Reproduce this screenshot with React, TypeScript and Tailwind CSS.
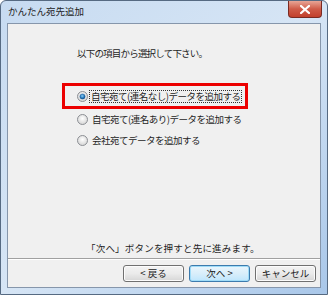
import React from 'react';

const Radio: React.FC<{ checked?: boolean }> = ({ checked }) => (
  <svg width="11" height="11" viewBox="0 0 11 11" className="shrink-0">
    <defs>
      <radialGradient id={checked ? 'rOn' : 'rOff'} cx="50%" cy="40%" r="60%">
        <stop offset="0%" stopColor="#ffffff" />
        <stop offset="100%" stopColor="#d4d4d4" />
      </radialGradient>
      <radialGradient id="dot" cx="45%" cy="40%" r="60%">
        <stop offset="0%" stopColor="#8fd0f5" />
        <stop offset="60%" stopColor="#2c7fc2" />
        <stop offset="100%" stopColor="#0e4f8c" />
      </radialGradient>
    </defs>
    <circle cx="5.5" cy="5.5" r="5" fill={`url(#${checked ? 'rOn' : 'rOff'})`} stroke="#8c8f94" strokeWidth="1" />
    {checked && <circle cx="5.5" cy="5.5" r="2.6" fill="url(#dot)" stroke="#1b5a94" strokeWidth="0.5" />}
  </svg>
);

const Btn: React.FC<{ label: string; primary?: boolean }> = ({ label, primary }) => (
  <div
    className={
      'w-[61px] h-[17px] rounded-[3px] border flex items-center justify-center text-[9.5px] leading-none text-[#1a1a1a] ' +
      (primary
        ? 'border-[#3d7bad] bg-gradient-to-b from-[#eaf6fd] via-[#d9eefa] to-[#bee6fd] shadow-[inset_0_0_0_1px_#9fdcf8]'
        : 'border-[#707070] bg-gradient-to-b from-[#f3f3f3] via-[#ebebeb] to-[#d6d6d6] shadow-[inset_0_0_0_1px_#fcfcfc]')
    }
  >
    {label}
  </div>
);

export default function App() {
  return (
    <div
      className="w-[328px] h-[295px] flex flex-col rounded-t-[6px] border border-[#566a82] bg-gradient-to-br from-[#c7dbf1] via-[#d6e5f5] to-[#a9c7e9] text-[#1e1e1e]"
      style={{ fontFamily: '"Noto Sans CJK JP", "Noto Sans", sans-serif' }}
    >
      {/* title bar */}
      <div className="h-[21px] flex items-start justify-between">
        <div className="pl-[7px] pt-[4px] text-[9.5px] leading-[12px] text-[#222]">かんたん宛先追加</div>
        <div className="mr-[5px] w-[34px] h-[17px] rounded-b-[4px] border border-t-0 border-[#7a2a22] bg-gradient-to-b from-[#e7a596] via-[#cf5b48] to-[#c2402c] flex items-center justify-center">
          <svg width="10" height="9" viewBox="0 0 10 9">
            <path d="M1 1 L9 8 M9 1 L1 8" stroke="#ffffff" strokeWidth="2.2" strokeLinecap="square" />
          </svg>
        </div>
      </div>

      {/* client area */}
      <div className="flex-1 mt-[1px] mx-[6px] mb-[6px] border border-[#8696ab] bg-[#f0f0f0] flex flex-col">
        <div className="pl-[69px] pt-[23px] text-[9.5px] leading-[12px] tracking-[-0.8px] whitespace-nowrap">以下の項目から選択して下さい。</div>

        <div className="mt-[24px] ml-[54px] w-[186px] h-[26px] border-[3px] border-[#ec0000] flex items-center pl-[12px] gap-[1px]">
          <Radio checked />
          <span className="text-[9.5px] leading-[11px] tracking-[-0.5px] whitespace-nowrap border border-dotted border-[#333] px-[1px]">
            自宅宛て(連名なし)データを追加する
          </span>
        </div>

        <div className="flex flex-col gap-[10px] pl-[69px] mt-[5px]">
          <div className="flex items-center gap-[3px]">
            <Radio />
            <span className="text-[9.5px] leading-[11px] tracking-[-0.5px] whitespace-nowrap pl-[1px]">自宅宛て(連名あり)データを追加する</span>
          </div>
          <div className="flex items-center gap-[3px]">
            <Radio />
            <span className="text-[9.5px] leading-[11px] tracking-[-0.5px] whitespace-nowrap pl-[1px]">会社宛てデータを追加する</span>
          </div>
        </div>

        <div className="flex-1" />

        <div className="pl-[78px] text-[9.5px] leading-[12px] tracking-[0.2px] whitespace-nowrap">「次へ」ボタンを押すと先に進みます。</div>

        <div className="mt-[4px] border-t border-[#a0a0a0] border-b border-b-white" />

        <div className="flex justify-end gap-[5px] pr-[4px] pt-[5px] pb-[5px]">
          <Btn label="< 戻る" />
          <Btn label="次へ >" primary />
          <Btn label="キャンセル" />
        </div>
      </div>
    </div>
  );
}
